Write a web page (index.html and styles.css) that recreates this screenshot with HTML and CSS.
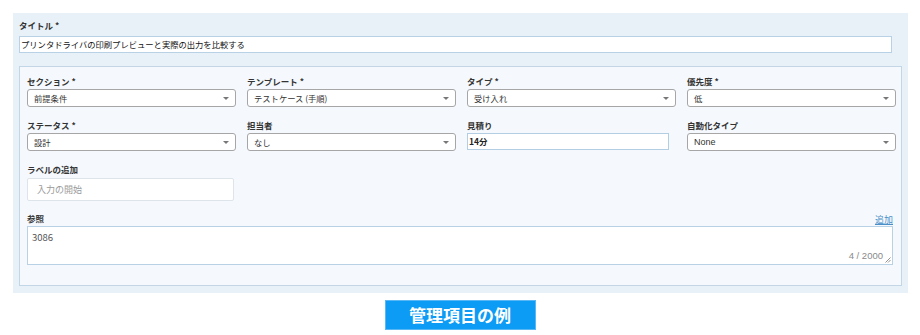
FILE: index.html
```html
<!DOCTYPE html>
<html lang="ja">
<head>
  <meta charset="UTF-8" />
  <title>管理項目の例</title>
  <link rel="stylesheet" href="styles.css">
</head>
<body>
  <div class="panel">
    <label class="field-label">タイトル *</label>
    <div class="title-input">プリンタドライバの印刷プレビューと実際の出力を比較する</div>

    <div class="inner">
      <div class="grid">
        <div class="field">
          <label class="field-label">セクション *</label>
          <div class="select">前提条件<span class="arrow"></span></div>
        </div>
        <div class="field">
          <label class="field-label">テンプレート *</label>
          <div class="select">テストケース (手順)<span class="arrow"></span></div>
        </div>
        <div class="field">
          <label class="field-label">タイプ *</label>
          <div class="select">受け入れ<span class="arrow"></span></div>
        </div>
        <div class="field">
          <label class="field-label">優先度 *</label>
          <div class="select">低<span class="arrow"></span></div>
        </div>

        <div class="field">
          <label class="field-label">ステータス *</label>
          <div class="select">設計<span class="arrow"></span></div>
        </div>
        <div class="field">
          <label class="field-label">担当者</label>
          <div class="select">なし<span class="arrow"></span></div>
        </div>
        <div class="field">
          <label class="field-label">見積り</label>
          <div class="text-input">14分</div>
        </div>
        <div class="field">
          <label class="field-label">自動化タイプ</label>
          <div class="select latin">None<span class="arrow"></span></div>
        </div>

        <div class="field">
          <label class="field-label">ラベルの追加</label>
          <div class="tag-input">入力の開始</div>
        </div>
      </div>

      <div class="refs">
        <div class="refs-head">
          <label class="field-label">参照</label>
          <a href="#" class="add-link">追加</a>
        </div>
        <div class="textarea">
          <span class="ref-value">3086</span>
          <span class="counter">4 / 2000</span>
          <svg class="resize" width="6" height="6" viewBox="0 0 6 6">
            <path d="M5.5 0.5 L0.5 5.5 M5.5 3 L3 5.5" stroke="#777" stroke-width="0.8" fill="none"/>
          </svg>
        </div>
      </div>
    </div>
  </div>

  <div class="caption-wrap">
    <div class="caption">管理項目の例</div>
  </div>
</body>
</html>
```

FILE: styles.css
```css
/* Page */
body {
  margin: 0;
  background: #ffffff;
  font-family: "Noto Sans CJK JP", "Noto Sans", sans-serif;
  color: #333;
}

/* Outer panel */
.panel {
  margin: 13px 0 0 13px;
  width: 883px;
  padding: 6px 6px 7px 6px;
  background: #e9f1f8;
}

.field-label {
  display: block;
  font-size: 8.5px;
  font-weight: bold;
  line-height: 13px;
  height: 14px;
  color: #333;
}

.title-input {
  margin-top: 3px;
  height: 15px;
  line-height: 15px;
  width: 869px;
  padding: 0 1px;
  background: #fff;
  border: 1px solid #b9d1e5;
  font-size: 8.3px;
  color: #111;
}

/* Inner panel */
.inner {
  margin-top: 13px;
  padding: 8px 8px 20px 7px;
  background: #f5f9fd;
  border: 1px solid #c3d6e6;
}

.grid {
  display: grid;
  grid-template-columns: repeat(4, 209px);
  column-gap: 11px;
  row-gap: 12px;
}

.select {
  position: relative;
  height: 16px;
  line-height: 16px;
  padding: 0 6px;
  background: #fff;
  border: 1px solid #a6a6a6;
  border-radius: 3px;
  font-size: 8.3px;
  color: #333;
}

.select.latin {
  font-family: "Liberation Sans", sans-serif;
  font-size: 9px;
}

.arrow {
  position: absolute;
  right: 6px;
  top: 7px;
  width: 0;
  height: 0;
  border-left: 3px solid transparent;
  border-right: 3px solid transparent;
  border-top: 3px solid #777;
}

.text-input {
  width: 198px;
  height: 15px;
  line-height: 15px;
  padding: 0 1px;
  background: #fff;
  border: 1px solid #b3cde2;
  font-size: 8.5px;
  font-weight: bold;
  color: #222;
}

.tag-input {
  width: 196px;
  height: 21px;
  line-height: 21px;
  padding: 0 0 0 9px;
  margin-top: 1px;
  background: #fff;
  border: 1px solid #dde4ea;
  border-radius: 2px;
  font-size: 9px;
  color: #9a9a9a;
}

/* References */
.refs {
  margin-top: 8px;
}

.refs-head {
  display: flex;
  justify-content: space-between;
  align-items: flex-end;
  height: 17px;
}

.add-link {
  font-size: 9px;
  line-height: 12px;
  color: #4a8fc8;
  text-decoration: underline;
}

.textarea {
  position: relative;
  height: 37px;
  background: #fff;
  border: 1px solid #b9d1e5;
}

.ref-value {
  position: absolute;
  left: 4px;
  top: 3px;
  font-size: 9.5px;
  color: #555;
}

.counter {
  position: absolute;
  right: 9px;
  bottom: 3px;
  font-size: 9.5px;
  color: #8a8a8a;
  font-family: "Liberation Sans", sans-serif;
}

.resize {
  position: absolute;
  right: 1px;
  bottom: 1px;
}

/* Caption button */
.caption-wrap {
  display: flex;
  justify-content: center;
  margin-top: 7px;
}

.caption {
  width: 149px;
  height: 28px;
  line-height: 28px;
  text-align: center;
  background: #0c9bf5;
  border: 1px solid #58b8f5;
  color: #fff;
  font-size: 17px;
  font-weight: bold;
}
```
